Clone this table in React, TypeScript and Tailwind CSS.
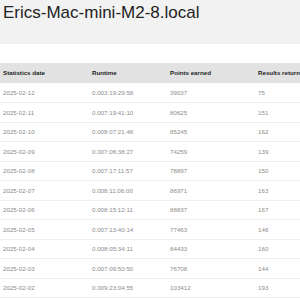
import React from 'react';

const rows = [
  ['2025-02-12', '0.003:19:29:58', '39037', '75'],
  ['2025-02-11', '0.007:19:41:10', '80625', '151'],
  ['2025-02-10', '0.008:07:21:46', '85245', '162'],
  ['2025-02-09', '0.007:06:38:27', '74259', '139'],
  ['2025-02-08', '0.007:17:11:57', '78897', '150'],
  ['2025-02-07', '0.008:11:06:00', '86971', '163'],
  ['2025-02-06', '0.008:15:12:11', '88837', '167'],
  ['2025-02-05', '0.007:13:40:14', '77463', '146'],
  ['2025-02-04', '0.008:05:34:11', '84433', '160'],
  ['2025-02-03', '0.007:09:50:50', '76708', '144'],
  ['2025-02-02', '0.009:23:04:55', '103412', '193'],
];

const App: React.FC = () => {
  return (
    <div className="w-[300px] h-[300px] overflow-hidden bg-white font-['Liberation_Sans',Arial,sans-serif]">
      {/* Host header */}
      <div className="h-[44px] bg-[#f2f2f2] px-[3px] pt-[3px]">
        <h1 className="text-[17px] leading-[20px] text-[#222] whitespace-nowrap">Erics-Mac-mini-M2-8.local</h1>
      </div>

      {/* Stats table */}
      <table className="mt-[19px] w-[380px] table-fixed border-collapse text-[6.2px]">
        <thead>
          <tr className="h-[20px] bg-[#e2e2e2] text-[#222]">
            <th className="w-[89px] px-[3px] text-left font-bold">Statistics date</th>
            <th className="w-[78px] px-[3px] text-left font-bold">Runtime</th>
            <th className="w-[88px] px-[3px] text-left font-bold">Points earned</th>
            <th className="px-[3px] text-left font-bold whitespace-nowrap">Results returned</th>
          </tr>
        </thead>
        <tbody className="text-[#8c8c8c]">
          {rows.map((r, i) => (
            <tr key={i} className="h-[19.5px] border-b border-[#efefef]">
              {r.map((c, j) => (
                <td key={j} className="px-[3px]">{c}</td>
              ))}
            </tr>
          ))}
        </tbody>
      </table>
    </div>
  );
};

export default App;
